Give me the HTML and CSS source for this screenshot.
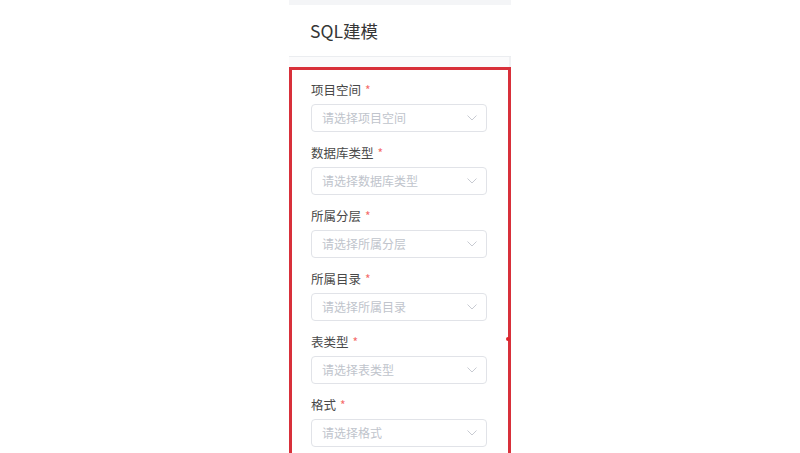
FILE: index.html
```html
<!DOCTYPE html>
<html lang="zh">
<head>
<meta charset="utf-8">
<title>SQL建模</title>
<link rel="stylesheet" href="styles.css">
</head>
<body>
<div class="panel">
  <div class="top-strip"></div>
  <div class="header">SQL建模</div>
  <div class="spacer"></div>
  <form class="form">
    <span class="edge-dot"></span>
    <div class="field">
      <div class="label">项目空间<span class="req">*</span></div>
      <div class="select"><span class="ph">请选择项目空间</span><svg class="chev" viewBox="0 0 10 6"><path d="M0.5 0.5 L5 5 L9.5 0.5"/></svg></div>
    </div>
    <div class="field">
      <div class="label">数据库类型<span class="req">*</span></div>
      <div class="select"><span class="ph">请选择数据库类型</span><svg class="chev" viewBox="0 0 10 6"><path d="M0.5 0.5 L5 5 L9.5 0.5"/></svg></div>
    </div>
    <div class="field">
      <div class="label">所属分层<span class="req">*</span></div>
      <div class="select"><span class="ph">请选择所属分层</span><svg class="chev" viewBox="0 0 10 6"><path d="M0.5 0.5 L5 5 L9.5 0.5"/></svg></div>
    </div>
    <div class="field">
      <div class="label">所属目录<span class="req">*</span></div>
      <div class="select"><span class="ph">请选择所属目录</span><svg class="chev" viewBox="0 0 10 6"><path d="M0.5 0.5 L5 5 L9.5 0.5"/></svg></div>
    </div>
    <div class="field">
      <div class="label">表类型<span class="req">*</span></div>
      <div class="select"><span class="ph">请选择表类型</span><svg class="chev" viewBox="0 0 10 6"><path d="M0.5 0.5 L5 5 L9.5 0.5"/></svg></div>
    </div>
    <div class="field">
      <div class="label">格式<span class="req">*</span></div>
      <div class="select"><span class="ph">请选择格式</span><svg class="chev" viewBox="0 0 10 6"><path d="M0.5 0.5 L5 5 L9.5 0.5"/></svg></div>
    </div>
  </form>
</div>
</body>
</html>
```

FILE: styles.css
```css
html, body {
  margin: 0;
  padding: 0;
  background: #ffffff;
  overflow: hidden;
}

body {
  font-family: "Noto Sans CJK SC", "Noto Sans", sans-serif;
  height: 453px;
}

.panel {
  margin-left: 289px;
  width: 222px;
}

.top-strip {
  height: 5px;
  background: #f4f5f7;
}

.header {
  height: 52px;
  box-sizing: border-box;
  border-bottom: 1px solid #ebedf0;
  padding-left: 21px;
  font-size: 17.5px;
  line-height: 52px;
  color: #363636;
}

.spacer {
  height: 10px;
  background: #fbfbfc;
  border-right: 2px solid #f0f1f3;
}

.form {
  position: relative;
  margin: 0;
  border: 3px solid #d8303a;
  padding: 10px 19px 20px 19px;
  display: flex;
  flex-direction: column;
  gap: 11px;
}

.edge-dot {
  position: absolute;
  right: -2px;
  top: 267px;
  width: 4px;
  height: 4px;
  border-radius: 50%;
  background: #e0242c;
}

.field {
  display: flex;
  flex-direction: column;
  gap: 4px;
}

.label {
  font-size: 12.5px;
  line-height: 20px;
  height: 20px;
  color: #484848;
}

.req {
  color: #f56c6c;
  margin-left: 4px;
  font-size: 12px;
}

.select {
  width: 176px;
  height: 28px;
  box-sizing: border-box;
  border: 1px solid #e1e3e8;
  border-radius: 4px;
  display: flex;
  align-items: center;
  justify-content: space-between;
  padding: 0 9px 0 10px;
}

.ph {
  font-size: 12px;
  color: #c0c4cc;
  line-height: 26px;
}

.chev {
  width: 10px;
  height: 6px;
}

.chev path {
  fill: none;
  stroke: #c8cbd2;
  stroke-width: 1;
}
```
